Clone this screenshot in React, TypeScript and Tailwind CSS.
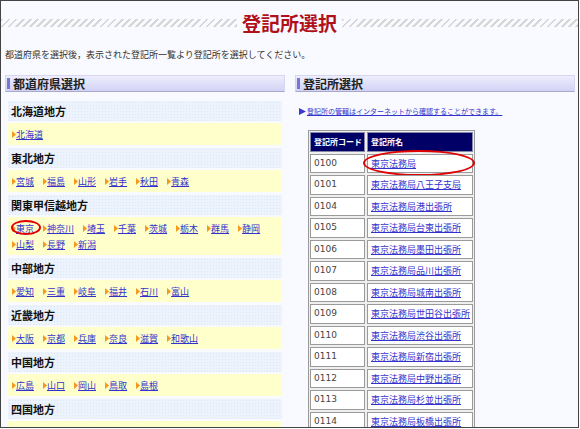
import React from "react";

const regions: { name: string; items: string[] }[] = [
  { name: "北海道地方", items: ["北海道"] },
  { name: "東北地方", items: ["宮城", "福島", "山形", "岩手", "秋田", "青森"] },
  {
    name: "関東甲信越地方",
    items: ["東京", "神奈川", "埼玉", "千葉", "茨城", "栃木", "群馬", "静岡", "山梨", "長野", "新潟"],
  },
  { name: "中部地方", items: ["愛知", "三重", "岐阜", "福井", "石川", "富山"] },
  { name: "近畿地方", items: ["大阪", "京都", "兵庫", "奈良", "滋賀", "和歌山"] },
  { name: "中国地方", items: ["広島", "山口", "岡山", "鳥取", "島根"] },
  { name: "四国地方", items: ["香川", "徳島", "高知", "愛媛"] },
];

const offices: [string, string][] = [
  ["0100", "東京法務局"],
  ["0101", "東京法務局八王子支局"],
  ["0104", "東京法務局港出張所"],
  ["0105", "東京法務局台東出張所"],
  ["0106", "東京法務局墨田出張所"],
  ["0107", "東京法務局品川出張所"],
  ["0108", "東京法務局城南出張所"],
  ["0109", "東京法務局世田谷出張所"],
  ["0110", "東京法務局渋谷出張所"],
  ["0111", "東京法務局新宿出張所"],
  ["0112", "東京法務局中野出張所"],
  ["0113", "東京法務局杉並出張所"],
  ["0114", "東京法務局板橋出張所"],
];

const Tri = () => (
  <svg width="4" height="7" viewBox="0 0 4 7" className="shrink-0">
    <polygon points="0,0 4,3.5 0,7" fill="#f39a1e" />
  </svg>
);

const SectionHeader = ({ title }: { title: string }) => (
  <div className="h-[17px] flex items-center border border-[#d6d6f4] border-b-[#a8a8c8] border-b-dotted bg-gradient-to-b from-[#eeeefc] to-[#d2d2f6]">
    <div className="ml-[1px] w-[3px] h-[11px] bg-[#7676d6]" />
    <span className="ml-[3px] text-[12px] leading-none font-bold text-[#222]">{title}</span>
  </div>
);

export default function App() {
  return (
    <div className="w-[579px] h-[428px] border border-[#444] bg-[#f9faff] overflow-hidden font-['Noto_Sans_CJK_JP',sans-serif]">
      {/* Title */}
      <div className="mt-[9px] h-[26px] flex items-center">
        <div className="flex-1 h-[8px] bg-[repeating-linear-gradient(135deg,#d6d6d6_0_2px,transparent_2px_5px)]" />
        <h1 className="px-[5px] text-[19px] leading-[26px] font-bold text-[#b0101a]">登記所選択</h1>
        <div className="flex-1 h-[8px] bg-[repeating-linear-gradient(135deg,#d6d6d6_0_2px,transparent_2px_5px)]" />
      </div>

      <p className="mt-[13px] ml-[4px] text-[9px] leading-[12px] text-[#333]">
        都道府県を選択後，表示された登記所一覧より登記所を選択してください。
      </p>

      <div className="mt-[14px] ml-[4px] flex gap-[10px]">
        {/* Left column */}
        <div className="w-[280px]">
          <SectionHeader title="都道府県選択" />
          <div className="mt-[9px] mx-[3px]">
            {regions.map((r) => (
              <div key={r.name} className="mb-[3px]">
                <div className="h-[20px] flex items-center pl-[3px] text-[11px] font-bold text-[#111] bg-[#ecf3fc] bg-[radial-gradient(#dce7f6_0.7px,transparent_0.8px)] bg-[length:3px_3px]">
                  {r.name}
                </div>
                <div className="mt-[2px] bg-[#ffffcc] py-[3px] pl-[4px] flex flex-wrap">
                  {r.items.map((it) => (
                    <a
                      key={it}
                      href="#"
                      className="relative inline-flex items-center h-[16px] mr-[9px] text-[9px] leading-none text-[#3333cc] underline"
                    >
                      <Tri />
                      <span>{it}</span>
                      {it === "東京" && (
                        <span className="absolute left-[-1px] right-[-7px] top-[0px] bottom-[1px] rounded-[50%] border-2 border-[#e00000]" />
                      )}
                    </a>
                  ))}
                </div>
              </div>
            ))}
          </div>
        </div>

        {/* Right column */}
        <div className="w-[280px]">
          <SectionHeader title="登記所選択" />
          <a href="#" className="mt-[13px] ml-[4px] h-[12px] flex items-center text-[7px] leading-none text-[#3333cc] underline">
            <svg width="7" height="7" viewBox="0 0 7 7" className="shrink-0 mr-[1px]">
              <polygon points="0,0 7,3.5 0,7" fill="#3a3acc" />
            </svg>
            <span>登記所の管轄はインターネットから確認することができます。</span>
          </a>

          <div className="mt-[13px] ml-[13px] w-fit grid grid-cols-[55px_106px] gap-[2px] p-[1px] border border-[#9a9a9a] bg-[#efefef]">
            <div className="h-[19.5px] flex items-center pl-[3px] bg-[#000066] border border-[#8888aa] text-[8px] font-bold text-white">
              登記所コード
            </div>
            <div className="h-[19.5px] flex items-center pl-[3px] bg-[#000066] border border-[#8888aa] text-[8px] font-bold text-white">
              登記所名
            </div>
            {offices.map(([code, name], i) => (
              <React.Fragment key={code}>
                <div className="h-[19.5px] flex items-center pl-[3px] bg-white border border-[#9a9a9a] text-[9px] font-['DejaVu_Sans',sans-serif] text-[#444]">
                  {code}
                </div>
                <div className="relative h-[19.5px] flex items-center pl-[3px] bg-white border border-[#9a9a9a]">
                  <a href="#" className="text-[9px] leading-none text-[#3333cc] underline">
                    {name}
                  </a>
                  {i === 0 && (
                    <span className="absolute left-[-5px] right-[-3px] top-[-5px] bottom-[-4px] rounded-[50%] border-2 border-[#e00000]" />
                  )}
                </div>
              </React.Fragment>
            ))}
          </div>
        </div>
      </div>
    </div>
  );
}
